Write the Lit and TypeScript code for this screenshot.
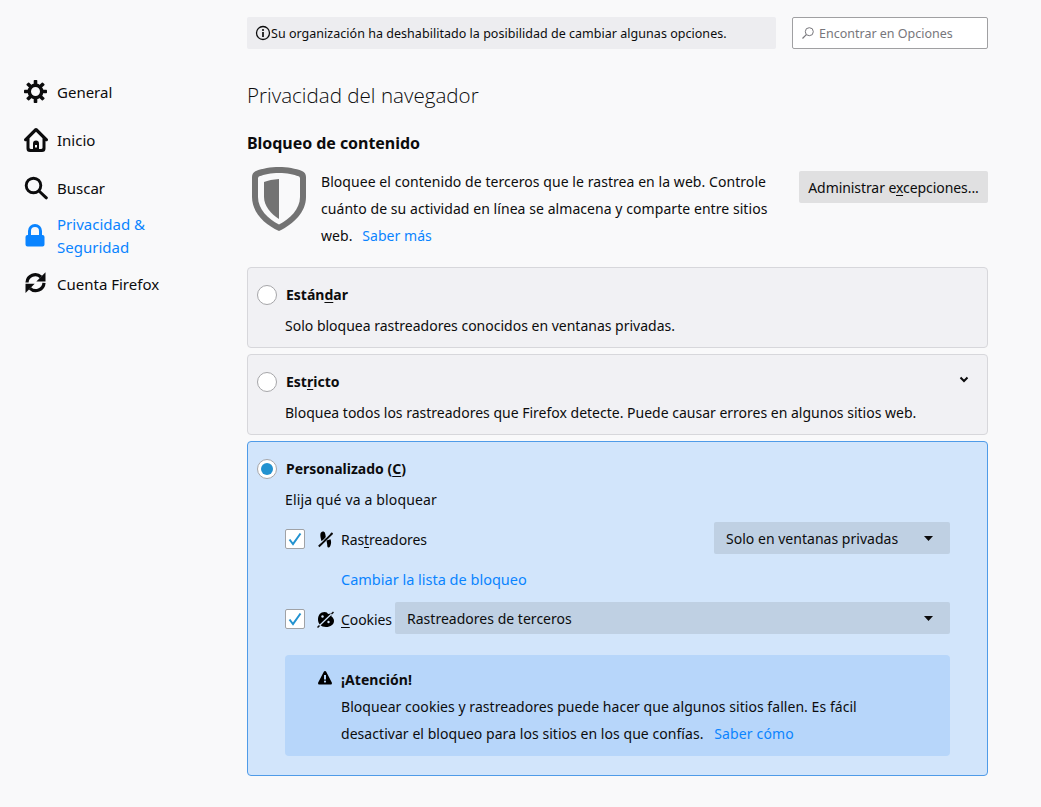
import { LitElement, html, css, svg } from "lit";
import { customElement } from "lit/decorators.js";

const gear = svg`<circle cx="11.500" cy="11.500" r="6.200" fill="none" stroke="#0c0c0d" stroke-width="3.400"/>
  ${[0, 45, 90, 135, 180, 225, 270, 315].map((a) => svg`<rect x="9.700" y="0" width="3.600" height="5" rx="0.800" transform="rotate(${a} 11.500 11.500)"/>`)}`;
const home = svg`<path fill-rule="evenodd" d="M12 0c.5 0 1 .2 1.400.6L23.400 10.400c.8.800.8 1.800.2 2.400-.6.600-1.500.7-2.100.2V20.500a3.500 3.500 0 0 1-3.500 3.500H6a3.500 3.500 0 0 1-3.500-3.500V13c-.6.500-1.500.4-2.100-.2-.6-.6-.6-1.600.2-2.400L10.600.6C11 .2 11.500 0 12 0zm0 3.800L5.500 10.200V19.800c0 .700.500 1.200 1.200 1.200h10.600c.7 0 1.200-.5 1.200-1.200V10.200z"/>
  <path fill-rule="evenodd" d="M12 12.500a3 3 0 0 1 3 3V22H9v-6.500a3 3 0 0 1 3-3zm-1 4.500v2.500h2V17z"/>`;
const search = svg`<circle cx="9.500" cy="9.500" r="7.300" fill="none" stroke="#0c0c0d" stroke-width="2.900"/><path d="M15 15l7.300 6.800" fill="none" stroke="#0c0c0d" stroke-width="3" stroke-linecap="round"/>`;
const lock = svg`<path fill-rule="evenodd" d="M11 0a7 7 0 0 1 7 7v4h.5A2 2 0 0 1 20.500 13v7.500a2 2 0 0 1-2 2h-15a2 2 0 0 1-2-2V13a2 2 0 0 1 2-2H4V7a7 7 0 0 1 7-7zm0 3a4 4 0 0 0-4 4v4h8V7a4 4 0 0 0-4-4z"/>`;
const sync = svg`<path d="M3 10.500A8.300 8.300 0 0 1 17 5" fill="none" stroke="#0c0c0d" stroke-width="3.200"/><path d="M21.500 .3V9.500H12.300z"/>
  <path d="M20 10.800A8.300 8.300 0 0 1 6 16.300" fill="none" stroke="#0c0c0d" stroke-width="3.200"/><path d="M1.500 21V11.800H10.700z"/>`;

const navItems = [
  { icon: gear, label: "General", kind: "" },
  { icon: home, label: "Inicio", kind: "" },
  { icon: search, label: "Buscar", kind: "" },
  { icon: lock, label: "Privacidad & Seguridad", kind: "active" },
  { icon: sync, label: "Cuenta Firefox", kind: "" },
];

const checkMark = svg`<path d="M1.500 7.500 5 12 12.500 1.500" fill="none" stroke="#2292d0" stroke-width="2"/>`;
const tri = svg`<path d="M0 0h9L4.500 5z"/>`;

@customElement("app-root")
export class AppRoot extends LitElement {
  static styles = css`
    :host { display: block; width: 1041px; height: 807px; overflow: hidden; background: #f9f9fa; color: #0c0c0d;
      font-family: "Noto Sans", sans-serif; font-size: 14px; line-height: 27px; letter-spacing: 0.02px; }
    * { box-sizing: border-box; }
    u { text-underline-offset: 2px; }
    .page { display: flex; height: 100%; }
    .side { width: 247px; flex: none; padding: 68px 60px 0 24px; }
    .nav { display: flex; align-items: center; gap: 9px; min-height: 48px; font-size: 15px; line-height: 23px; letter-spacing: 0; }
    .nav svg { width: 24px; height: 24px; flex: none; fill: #0c0c0d; }
    .nav.active { color: #0a84ff; }
    .nav.active svg { fill: #0a84ff; }
    .nav span { display: block; }
    .main { width: 741px; flex: none; padding-top: 17px; }
    .top { display: flex; gap: 16px; height: 32px; }
    .notice { width: 529px; background: #ededf0; border-radius: 2px; display: flex; align-items: center; padding-left: 8px; font-size: 12.500px; white-space: nowrap; letter-spacing: 0.03px; }
    .notice svg { width: 16px; height: 16px; flex: none; }
    .find { flex: 1; background: #fff; border: 1px solid #a0a0a2; border-radius: 2px; display: flex; align-items: center; padding-left: 9px; gap: 5px; font-size: 12.500px; color: #77767b; letter-spacing: 0; }
    .find svg { width: 12px; height: 12px; flex: none; }
    h1 { margin: 26px 0 0; font-size: 20.600px; line-height: 40px; font-weight: 300; font-family: "Open Sans", sans-serif; letter-spacing: 0; color: #0c0c0d; }
    h2 { margin: 15px 0 0; font-size: 16px; line-height: 27px; font-weight: 700; letter-spacing: -0.05px; }
    .intro { display: flex; margin-top: 11px; height: 80px; }
    .shield { width: 54px; height: 64px; margin: -1px 15px 0 5px; flex: none; }
    .intro p { margin: 0; width: 453px; flex: none; letter-spacing: 0.06px; }
    a { color: #0a84ff; text-decoration: none; }
    .intro a { margin-left: 6px; }
    .btn { margin: 3px 0 0 auto; height: 32px; width: 189px; background: #e0e0e1; border-radius: 2px; display: flex; align-items: center; justify-content: center; white-space: nowrap; font-size: 14px; letter-spacing: -0.07px; }
    .cards { display: flex; flex-direction: column; gap: 6px; margin-top: 19px; }
    .card { position: relative; background: #f1f1f4; border: 1px solid #d7d7db; border-radius: 4px; height: 81px; padding: 13px 37px 0 37px; letter-spacing: 0; }
    .head { display: flex; align-items: center; gap: 9px; margin-left: -28px; height: 27px; font-weight: 700; letter-spacing: 0; }
    .radio { width: 20px; height: 20px; border-radius: 50%; border: 1px solid #a6a6a9; background: #fff; flex: none; display: flex; align-items: center; justify-content: center; }
    .radio i { width: 12px; height: 12px; border-radius: 50%; background: #2292d0; }
    .desc { margin-top: 4px; }
    .sel .desc { letter-spacing: 0.15px; }
    .chev { position: absolute; right: 17px; top: 18px; width: 12px; height: 12px; }
    .card.sel { background: #d2e5fb; border-color: #4f9be8; height: 335px; }
    .line { display: flex; align-items: center; height: 34px; letter-spacing: -0.07px; }
    .check { width: 20px; height: 20px; background: #fff; border: 1px solid #a0a2a6; border-radius: 2px; flex: none; display: flex; align-items: center; justify-content: center; }
    .check svg { width: 14px; height: 14px; }
    .ic { width: 15px; height: 17px; margin: 0 8px 0 13px; flex: none; }
    .sel-box { background: #bfd0e3; border-radius: 2px; height: 32px; margin-bottom: 2px; display: flex; align-items: center; justify-content: space-between; padding: 0 17px 0 12px; letter-spacing: 0.02px; }
    .tr { margin-top: 9px; }
    .tr .sel-box { width: 236px; margin-left: auto; }
    .ck .sel-box { flex: 1; margin-left: 3px; }
    .ck .ic { width: 17px; margin: 0 7px 0 12px; }
    .tri { width: 9px; height: 5px; flex: none; fill: #0c0c0d; }
    .lnk { margin: 10px 0 0 56px; line-height: 27px; height: 27px; font-size: 14.500px; letter-spacing: 0; }
    .ck { margin-top: 9px; }
    .warn { margin-top: 19px; height: 101px; background: #b7d6fa; border-radius: 4px; padding: 11px 62px 0 56px; position: relative; letter-spacing: 0.05px; }
    .warn svg { position: absolute; left: 33px; top: 16px; width: 14px; height: 14px; }
    .warn b { display: block; font-weight: 700; }
    .warn a { margin-left: 7px; letter-spacing: 0.15px; }
  `;

  render() {
    return html`<div class="page">
      <nav class="side">
        ${navItems.map((n) => html`<div class="nav ${n.kind}"><svg viewBox="0 0 24 24">${n.icon}</svg><span>${n.label}</span></div>`)}
      </nav>
      <main class="main">
        <div class="top">
          <div class="notice">
            <svg viewBox="0 0 16 16"><circle cx="8" cy="8" r="6.500" fill="none" stroke="#0c0c0d" stroke-width="1.300"/><circle cx="8" cy="5" r="1"/><rect x="7.200" y="7" width="1.600" height="5"/></svg>
            Su organización ha deshabilitado la posibilidad de cambiar algunas opciones.
          </div>
          <div class="find">
            <svg viewBox="0 0 12 12"><circle cx="7.300" cy="4.700" r="4" fill="none" stroke="#77767b" stroke-width="1"/><path d="M4.300 7.700 .5 11.500" stroke="#77767b" stroke-width="1.200"/></svg>
            Encontrar en Opciones
          </div>
        </div>
        <h1>Privacidad del navegador</h1>
        <h2>Bloqueo de contenido</h2>
        <div class="intro">
          <svg class="shield" viewBox="0 0 54 64">
            <path fill-rule="evenodd" fill="#737373" d="M27 0c8 0 17 1.500 23 4 2.500 1 4 3 4 6v20c0 15-12 27-27 34C12 57 0 45 0 30V10c0-3 1.500-5 4-6C10 1.500 19 0 27 0zm0 6C19 6 12 7.500 7.500 9.300 6.500 9.700 6 10.500 6 11.500V30c0 12 10 22 21 27.500C38 52 48 42 48 30V11.500c0-1-.5-1.800-1.500-2.200C42 7.500 35 6 27 6z"/>
            <path fill="#737373" d="M27 12v40C19 47 12 39 12 30V15c4-1.500 9-2.700 15-3z"/>
          </svg>
          <p><span>Bloquee el contenido de terceros que le rastrea en la web. Controle cuánto de su actividad en línea se almacena y comparte entre sitios</span> <span>web.</span> <a>Saber más</a></p>
          <div class="btn"><span>Administrar e<u>x</u>cepciones...</span></div>
        </div>
        <div class="cards">
          <div class="card">
            <div class="head"><span class="radio"></span><span>Están<u>d</u>ar</span></div>
            <div class="desc">Solo bloquea rastreadores conocidos en ventanas privadas.</div>
          </div>
          <div class="card">
            <div class="head"><span class="radio"></span><span>Est<u>r</u>icto</span></div>
            <div class="desc">Bloquea todos los rastreadores que Firefox detecte. Puede causar errores en algunos sitios web.</div>
            <svg class="chev" viewBox="0 0 12 12"><path d="M2.500 4.500 6 8l3.500-3.500" fill="none" stroke="#0c0c0d" stroke-width="2"/></svg>
          </div>
          <div class="card sel">
            <div class="head"><span class="radio"><i></i></span><span>Personalizado (<u>C</u>)</span></div>
            <div class="desc">Elija qué va a bloquear</div>
            <div class="line tr">
              <span class="check"><svg viewBox="0 0 14 14">${checkMark}</svg></span>
              <svg class="ic" viewBox="0 0 15 17"><path d="M3 1.500C4.500 0 6.500.5 7 2c.6 2 1 4.500.7 6.500L3.500 10C3 8 1.500 3.500 3 1.500z"/><path d="M8.500 9.500l4-1.200c.8 2 .8 4 .2 5.500-.4 1.300-.8 2.500-2 2.700-1.500.2-1.400-1.500-1.500-3z"/><path d="M.8 15.500 14.500 2" stroke="#0c0c0d" stroke-width="2"/><path d="M2 12.500 11.500 3" stroke="#d2e5fb" stroke-width="1"/></svg>
              <span>Ras<u>t</u>readores</span>
              <div class="sel-box"><span>Solo en ventanas privadas</span><svg class="tri" viewBox="0 0 9 5">${tri}</svg></div>
            </div>
            <div class="lnk"><a>Cambiar la lista de bloqueo</a></div>
            <div class="line ck">
              <span class="check"><svg viewBox="0 0 14 14">${checkMark}</svg></span>
              <svg class="ic" viewBox="0 0 17 17"><path d="M7.500 1c2 0 3 .8 3.500 2l3-.5.5 3c1.500 1 2.500 2.500 2.500 4.500 0 3.500-3.500 6-8 6-5 0-8-3-8-7.500C1 4 3.500 1 7.500 1z"/><path d="M2.500 14.500 14.500 3" stroke="#d2e5fb" stroke-width="1.200"/><path d="M.5 16.500 2.500 14.500M14.500 3 16.500 1" stroke="#0c0c0d" stroke-width="1.500"/><circle cx="5.500" cy="5.500" r="1.200" fill="#d2e5fb"/><circle cx="11.500" cy="11" r="1.200" fill="#d2e5fb"/></svg>
              <span><u>C</u>ookies</span>
              <div class="sel-box"><span>Rastreadores de terceros</span><svg class="tri" viewBox="0 0 9 5">${tri}</svg></div>
            </div>
            <div class="warn">
              <svg viewBox="0 0 14 14"><path fill-rule="evenodd" d="M7 0c.5 0 1 .3 1.200.8l5.600 10.700c.4.900-.1 1.900-1.200 1.900H1.400C.3 13.400-.2 12.400.2 11.500L5.800.8C6 .3 6.500 0 7 0zM6 4v4.500h2V4zm1 5.500a1.100 1.100 0 1 0 0 2.200 1.100 1.100 0 0 0 0-2.200z"/></svg>
              <b>¡Atención!</b>
              <span>Bloquear cookies y rastreadores puede hacer que algunos sitios fallen. Es fácil</span><br><span>desactivar el bloqueo para los sitios en los que confías.</span> <a>Saber cómo</a>
            </div>
          </div>
        </div>
      </main>
    </div>`;
  }
}
